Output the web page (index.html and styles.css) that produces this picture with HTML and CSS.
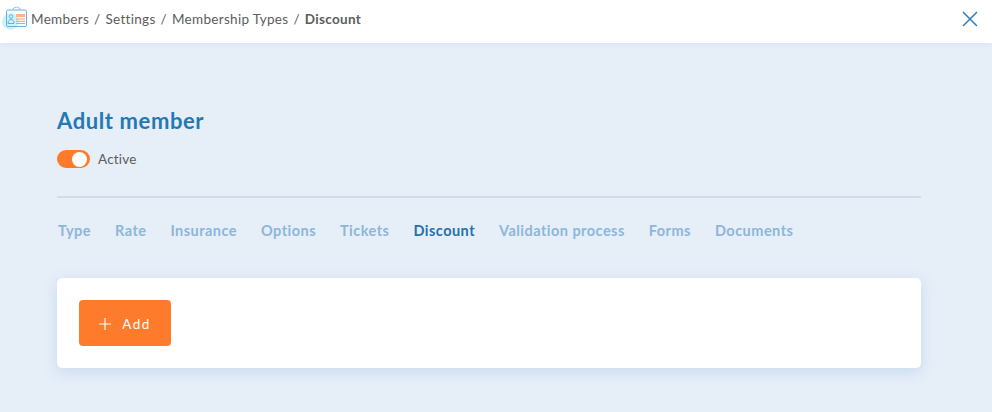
FILE: index.html
```html
<!DOCTYPE html>
<html lang="en">
<head>
  <meta charset="UTF-8" />
  <title>Discount</title>
  <link rel="stylesheet" href="styles.css">
</head>
<body>
  <header class="topbar">
    <nav class="crumbs">
      <svg class="crumbs-icon" width="30" height="30" viewBox="1 3.500 30 30" fill="none">
        <circle cx="10.500" cy="21" r="8.500" fill="#cdf3fa"/>
        <rect x="6.500" y="9.500" width="20" height="16.500" rx="1.500" stroke="#6aaedd"/>
        <path d="M13 9.500V8l3.500-1.500L20 8v1.500" stroke="#8fc3e6"/>
        <circle cx="11" cy="16" r="1.800" stroke="#6aaedd"/>
        <path d="M8 23c0-2.500 1.200-4 3-4s3 1.500 3 4z" stroke="#6aaedd"/>
        <rect x="16" y="13.500" width="9" height="3" fill="#ffb384"/>
        <path d="M16 18.500h9M16 20.800h9M16 23h9" stroke="#ff9a5e"/>
      </svg>
      <span>Members</span><span class="sep">/</span>
      <span>Settings</span><span class="sep">/</span>
      <span>Membership Types</span><span class="sep">/</span>
      <strong>Discount</strong>
    </nav>
    <svg class="close" width="16" height="16" viewBox="0 0 16 16" fill="none">
      <path d="M1 1l14 14M15 1L1 15" stroke="#2b7fbd" stroke-width="1.500"/>
    </svg>
  </header>

  <main class="content">
    <h1 class="title">Adult member</h1>
    <div class="status">
      <span class="toggle"><span class="knob"></span></span>
      <span>Active</span>
    </div>
    <hr class="divider" />
    <ul class="tabs">
      <li>Type</li>
      <li>Rate</li>
      <li>Insurance</li>
      <li>Options</li>
      <li>Tickets</li>
      <li class="active">Discount</li>
      <li>Validation process</li>
      <li>Forms</li>
      <li>Documents</li>
    </ul>
    <section class="card">
      <button class="add-btn">
        <svg class="plus" width="12" height="12" viewBox="0 0 12 12" fill="none">
          <path d="M6 0v12M0 6h12" stroke="#fff" stroke-width="1.200"/>
        </svg>
        Add
      </button>
    </section>
  </main>
</body>
</html>
```

FILE: styles.css
```css
* {
  box-sizing: border-box;
}
html, body {
  height: 100%;
}
body {
  margin: 0;
  background-color: #e6eef8;
  color: #5c5c5c;
  font-family: Lato, 'Noto Sans', sans-serif;
  overflow: hidden;
}
.topbar {
  height: 43px;
  background-color: white;
  box-shadow: 0 1px 6px rgba(120, 160, 210, 0.12);
  display: flex;
  align-items: center;
  justify-content: space-between;
  padding: 0 14px 6px 1px;
}
.crumbs {
  display: flex;
  align-items: center;
  font-size: 13.500px;
  letter-spacing: 0.3px;
}
.crumbs strong {
  font-weight: 700;
}
.sep {
  margin: 0 5px;
}
.content {
  padding: 63px 71px 0 57px;
}
.title {
  margin: 0;
  font-size: 22px;
  line-height: 30px;
  font-weight: 700;
  letter-spacing: 0.6px;
  color: #2479b5;
}
.status {
  display: flex;
  align-items: center;
  gap: 8px;
  margin-top: 14px;
  font-size: 13.500px;
  letter-spacing: 0.2px;
}
.toggle {
  width: 33px;
  height: 18px;
  border-radius: 9px;
  background-color: #ff7b2c;
  display: flex;
  justify-content: flex-end;
  align-items: center;
  padding-right: 3px;
}
.knob {
  width: 15px;
  height: 15px;
  border-radius: 50%;
  background-color: white;
}
.divider {
  margin: 28px 0 0;
  border: none;
  height: 2px;
  background-color: #d2dbe9;
}
.tabs {
  list-style: none;
  margin: 24px 0 0;
  padding: 0 0 0 1px;
  display: flex;
  gap: 24px;
  font-size: 14.500px;
  line-height: 18px;
  font-weight: 700;
  letter-spacing: 0.47px;
  color: #8cb6db;
}
.tabs .active {
  color: #2471ad;
}
.card {
  margin-top: 38px;
  height: 90px;
  padding: 22px;
  background-color: white;
  border-radius: 5px;
  box-shadow: 0 4px 14px rgba(120, 160, 220, 0.25);
}
.add-btn {
  width: 92px;
  height: 46px;
  padding: 1px 0 0;
  border: none;
  border-radius: 4px;
  background-color: #ff7b2c;
  color: #fff;
  font-family: inherit;
  font-size: 13.500px;
  letter-spacing: 1.500px;
  display: flex;
  align-items: center;
  justify-content: center;
  cursor: pointer;
}
.plus {
  margin-right: 11px;
}
```
